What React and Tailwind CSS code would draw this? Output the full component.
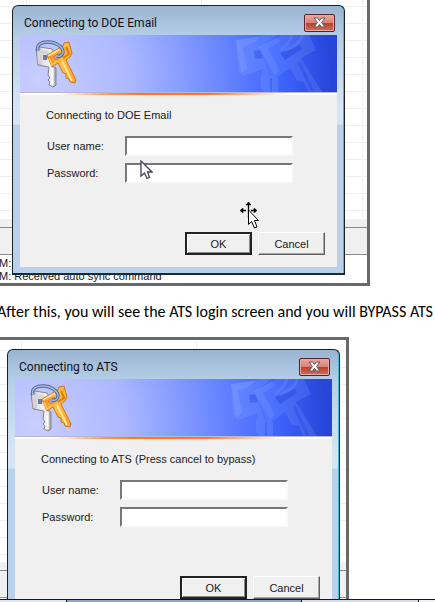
import React from 'react';

const WINDOW_BG = 'bg-[#f0f0f0]';

function Keys() {
  return (
    <svg width="44" height="50" viewBox="0 0 44 50" aria-hidden="true">
      <defs>
        <linearGradient id="silver" x1="0" x2="1">
          <stop offset="0" stopColor="#a0a0a8" />
          <stop offset="0.35" stopColor="#e6e6e8" />
          <stop offset="0.75" stopColor="#f2f2f2" />
          <stop offset="1" stopColor="#9c9ca2" />
        </linearGradient>
        <linearGradient id="gold" x1="0" x2="1" y1="0.4" y2="0.6">
          <stop offset="0" stopColor="#f58a12" />
          <stop offset="0.5" stopColor="#ffbe45" />
          <stop offset="1" stopColor="#f9a52c" />
        </linearGradient>
      </defs>
      {/* silver key */}
      <path d="M2 10 L6 8 L18 10 L21 15 L20 25 L18 27 L22 29 L22 46 L19 48 L15 46 L16 43 L14 41 L16 39 L14 36 L15 28 L4 26 Z" fill="url(#silver)" stroke="#85858f" strokeWidth="1" />
      <path d="M3 11 L15 12 L14 15 L6 16 L7 24 L4 25 Z" fill="#d6d6da" />
      <path d="M9 16 L14 16 L13 21 L9 21 Z" fill="#7478a0" />
      <path d="M18.500 29 V46" stroke="#fff" strokeWidth="2" />
      {/* gold key */}
      <path d="M13 16 L29 7 L30 4 L35 3 L38 14 L36 18 L32 21 L42 41 L41 44 L36 43 L35 40 L32 39 L32 35 L29 34 L24 24 L18 28 Z" fill="url(#gold)" stroke="#c77722" strokeWidth="1" />
      <path d="M14 17 L28 9" stroke="#ffe2a0" strokeWidth="2" fill="none" />
      <path d="M15 19 L18 26 L23 22" stroke="#ffc463" strokeWidth="1.500" fill="none" />
      <path d="M19 18 L25 14 L27 18 L22 21 Z" fill="#a9a5d0" stroke="#e07f14" strokeWidth="1" />
      <path d="M32 8 L35 15 L29 19" stroke="#e8760c" strokeWidth="2" fill="none" />
      <path d="M28 22 L38 42" stroke="#ffe78c" strokeWidth="2" />
      {/* ring */}
      <path d="M4 12 C2 5 8 3 14 3 C22 3 29 8 29 13 C29 16 26 18 23 17" fill="none" stroke="#566a90" strokeWidth="3.500" />
      <path d="M4 12 C2 5 8 3 14 3 C22 3 29 8 29 13 C29 16 26 18 23 17" fill="none" stroke="#9dbbe0" strokeWidth="1.500" />
    </svg>
  );
}

function BannerArt() {
  return (
    <svg width="104" height="57" viewBox="0 0 104 57" aria-hidden="true">
      {/* back key */}
      <path d="M3 5 L33 0 L44 0 L27 13 L30 22 L37 40 L45 43 L45 57 L31 57 L28 52 L28 41 L30 34 L10 41 L5 36 Z" fill="#779bff" fillOpacity="0.3" />
      <path d="M3 5 L27 2 L22 7 L10 12 L14 34 L8 38 Z" fill="#a2baff" fillOpacity="0.18" />
      <path d="M21 16 L27 15 L30 23 L22 24 Z" fill="#234be0" fillOpacity="0.4" />
      {/* front key */}
      <path d="M26 12 L48 0 L76 0 L83 15 L68 23 L89 57 L75 57 L71 47 L64 46 L57 33 L43 43 L38 40 Z" fill="#82a4ff" fillOpacity="0.2" />
      <path d="M26 12 L43 3 L48 6 L35 14 L47 36 L42 41 Z" fill="#9ab5ff" fillOpacity="0.16" />
      <path d="M47 18 L67 10 L69 14 L52 25 Z" fill="#2348dd" fillOpacity="0.5" />
      <path d="M59 0 C57 7 53 11 47 15 M69 0 C68 8 60 12 52 16" fill="none" stroke="#86a7ff" strokeOpacity="0.2" strokeWidth="3" />
      <path d="M66 27 L80 57" stroke="#234ce6" strokeOpacity="0.4" strokeWidth="3" />
      <path d="M38 43 V57" stroke="#244ee9" strokeOpacity="0.35" strokeWidth="2" />
    </svg>
  );
}

function ArrowCursor() {
  return (
    <svg width="13" height="20" viewBox="0 0 13 20" className="absolute left-[127px] top-[154px]" aria-hidden="true">
      <path d="M1 1 V16 L4.500 13 L7 18.500 L9.500 17.500 L7.500 12 H12 Z" fill="#fff" stroke="#414455" strokeWidth="1.300" />
    </svg>
  );
}

function MoveCursor() {
  return (
    <svg width="20" height="28" viewBox="0 0 20 28" className="absolute left-[226px] top-[195px]" aria-hidden="true">
      <path d="M9.500 2 V17 M2 9.500 H7 M12 9.500 H17" stroke="#000" strokeWidth="1.300" />
      <path d="M9.500 1 L12 4 H7 Z M1 9.500 L4 7 V12 Z M18 9.500 L15 7 V12 Z" fill="#000" stroke="#000" strokeWidth=".5" />
      <path d="M9.500 9 V23.500 L12.500 20.500 L15.500 27 L18 26 L15.500 19.500 H19.500 Z" fill="#fff" stroke="#000" strokeWidth="1" />
    </svg>
  );
}

function Field({ id, label, type }) {
  return (
    <div className="flex items-center">
      <label htmlFor={id} className="w-[78px] pb-px">{label}</label>
      <input
        id={id}
        type={type}
        className="h-5 w-[168px] border-2 border-t-[#777] border-l-[#777] border-r-[#f9f9f9] border-b-[#f9f9f9] bg-white px-1 outline-none"
      />
    </div>
  );
}

function LoginDialog({ id, title, message, open, children }) {
  return (
    <div
      role="dialog"
      aria-labelledby={`${id}-title`}
      className={`relative col-start-1 row-start-1 flex flex-col rounded-t-md border border-[#1c2126] bg-[linear-gradient(#9ab4d1,#b5cee7_30px,#d5e5f5_100px,#d5e5f5_118px,#b9d1ea_119px)] px-[7px] shadow-[inset_-1px_0_0_#35c1dc] ${open ? 'mr-[6px] ml-[7px] mt-[9px] border-b-0' : 'mr-[22px] ml-3 mt-[5px] mb-2 border-b-2 border-b-[#182b34] pb-[6px]'}`}
    >
      <div className="flex h-[29px] items-center justify-between pl-1">
        <h2 id={`${id}-title`} className="pt-1 font-['Roboto',sans-serif] text-[12px] leading-4 text-[#101018]">{title}</h2>
        <button
          type="button"
          aria-label="Close"
          className="mt-1 mr-[2px] flex h-[18px] w-[31px] items-center justify-center rounded-[2px] border border-[#57202d] bg-[linear-gradient(#e9a79c,#d98376_48%,#bd3d28_50%,#cf705c)] shadow-[inset_0_0_0_1px_#e7aaa0]"
        >
          <svg width="13" height="11" viewBox="0 0 13 11" aria-hidden="true">
            <path d="M1 1 H4.500 L6.500 3.500 L8.500 1 H12 L8.500 5.500 L12 10 H8.500 L6.500 7.500 L4.500 10 H1 L4.500 5.500 Z" fill="#fff" stroke="#5c5863" strokeWidth="1" />
          </svg>
        </button>
      </div>

      {/* Banner */}
      <div className="flex h-[57px] items-start justify-between overflow-hidden bg-[radial-gradient(ellipse_317px_300px_at_20px_45px,#c9ceff,#adb9ff_28%,#6d89ff_56%,#3f66ff_75%,#2746d9_92%)] pl-[14px]">
        <div className="pt-1"><Keys /></div>
        <BannerArt />
      </div>
      <div className="h-[3px] border-t border-[#b9b4d8] bg-[linear-gradient(90deg,#fff_12%,#ff9a3c_28%,#ff7a0a_38%,#ff7a0a_60%,#fff_84%)]" />

      {/* Form */}
      <form className={`flex flex-col pt-3 font-['Liberation_Sans',sans-serif] text-[11px] leading-4 text-[#202020] ${WINDOW_BG}`}>
        <p className="pl-[26px]">{message}</p>
        <div className="flex flex-col gap-[7px] pt-[13px] pl-[27px]">
          <Field id={`${id}-user`} label="User name:" type="text" />
          <Field id={`${id}-pass`} label="Password:" type="password" />
        </div>
        <div className={`flex justify-end gap-[6px] pt-[49px] pr-3 ${open ? '' : 'pb-3'}`}>
          <button type="button" className="h-[23px] w-[67px] border-2 border-[#222] shadow-[inset_1px_1px_0_#fff,inset_-1px_-1px_0_#8a8a8a]">OK</button>
          <button type="button" className="h-[23px] w-[67px] border border-t-white border-l-white border-r-[#606060] border-b-[#606060] shadow-[inset_-1px_-1px_0_#a5a5a5]">Cancel</button>
        </div>
      </form>
      {children}
    </div>
  );
}

function Backdrop({ grid, children }) {
  return (
    <div className="col-start-1 row-start-1 flex min-h-0 flex-col overflow-hidden whitespace-nowrap">
      <div className={`flex-1 ${grid}`} />
      <div className={`h-2 ${WINDOW_BG}`} />
      <div className={`h-7 border-y border-[#8a8a8a] ${WINDOW_BG}`} />
      {children}
    </div>
  );
}

export default function App() {
  return (
    <main className="overflow-hidden bg-white">
      <section className="mr-[65px] grid border-r-[3px] border-b-[3px] border-[#696969]">
        <Backdrop grid="bg-[linear-gradient(90deg,transparent_26px,#efefef_26px,#efefef_27px,transparent_27px,transparent_201px,#efefef_201px,#efefef_202px,transparent_202px,transparent_362px,#efefef_362px,#efefef_363px,transparent_363px),repeating-linear-gradient(transparent_0_6px,#efefef_6px_7px,transparent_7px_17px)]">
          <div className="-ml-px h-7 pt-[2px] font-['Liberation_Sans',sans-serif] text-[11px] leading-[13px] text-[#151525]">
            <p>M:</p>
            <p>M: Received auto sync command</p>
          </div>
        </Backdrop>
        <LoginDialog id="doe" title="Connecting to DOE Email" message="Connecting to DOE Email">
          <ArrowCursor />
          <MoveCursor />
        </LoginDialog>
      </section>

      <p className="-ml-[3px] pt-4 pb-[15px] font-['Carlito',sans-serif] text-[16px] leading-5 whitespace-nowrap text-black">
        After this, you will see the ATS login screen and you will BYPASS ATS
      </p>

      <section className="mr-[86px] grid border-t-[3px] border-r-[3px] border-[#696969]">
        <Backdrop grid="bg-[linear-gradient(90deg,transparent_21px,#efefef_21px,#efefef_22px,transparent_22px,transparent_196px,#efefef_196px,#efefef_197px,transparent_197px),repeating-linear-gradient(transparent_0_10px,#efefef_10px_11px,transparent_11px_17px)]">
          <div className="h-px bg-white" />
        </Backdrop>
        <LoginDialog id="ats" title="Connecting to ATS" message="Connecting to ATS (Press cancel to bypass)" open />
      </section>

      {/* Top edge of the taskbar */}
      <div className="flex h-[3px] gap-px border-t border-[#151525] bg-[#151525]">
        <div className="w-[66px] bg-[#dfe6f0]" />
        <div className="flex-1 bg-[#90a4c4]" />
        <div className="w-[116px] bg-[#d7dde8]" />
        <div className="w-4 bg-[#eef1f6]" />
      </div>
    </main>
  );
}
